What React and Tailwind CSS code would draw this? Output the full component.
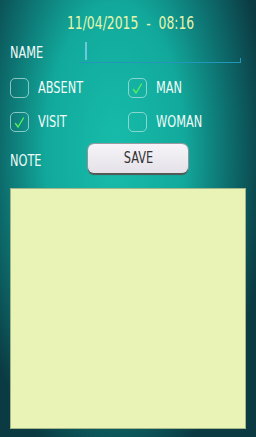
import React from "react";

const font = { fontFamily: '"DejaVu Sans Condensed", "Liberation Sans Narrow", "Liberation Sans", sans-serif' };

function Label({ children, className = "" }) {
  return (
    <span className={"block origin-left scale-x-[0.84] text-[15px] text-[#f2fbf8] leading-none whitespace-nowrap " + className}>
      {children}
    </span>
  );
}

function Box({ checked }) {
  return (
    <div className="w-[19px] h-[20px] shrink-0 rounded-[5px] border border-[#b9e6df]/70 flex items-center justify-center">
      {checked && (
        <svg width="13" height="13" viewBox="0 0 13 13">
          <path d="M2.5 7.5 L5 11 L10.5 2" fill="none" stroke="#55ee5e" strokeWidth="1.4" strokeLinecap="round" />
        </svg>
      )}
    </div>
  );
}

function Check({ label, checked }) {
  return (
    <div className="flex items-center gap-[9px] w-[119px]">
      <Box checked={checked} />
      <div className="flex"><Label>{label}</Label></div>
    </div>
  );
}

export default function App() {
  return (
    <div
      className="w-[256px] h-[437px] overflow-hidden bg-[radial-gradient(ellipse_60%_75%_at_45%_35%,#17bcab_0%,#12a99c_45%,#0d6c6c_75%,#0b3a42_100%)] flex flex-col px-[10px]"
      style={font}
    >
      <div className="pt-[15px] h-[42px] flex justify-center pl-[6px]">
        <span className="block scale-x-[0.81] text-[17px] leading-none text-[#e7f5ad] whitespace-nowrap">
          11/04/2015&nbsp;&nbsp;-&nbsp;&nbsp;08:16
        </span>
      </div>
      <div className="flex items-stretch h-[21px]">
        <div className="w-[70px] flex items-center pt-[2px]"><Label>NAME</Label></div>
        <div className="flex-1 border-b-[1.5px] border-[#2496bb] mr-[5px] relative">
          <div className="absolute left-[5px] top-0 h-[18px] w-[1.5px] bg-[#6cc8dc]"></div>
          <div className="absolute right-0 bottom-0 h-[4px] w-[1.5px] bg-[#2496bb]"></div>
        </div>
      </div>
      <div className="flex mt-[15px]">
        <Check label="ABSENT" />
        <Check label="MAN" checked />
      </div>
      <div className="flex mt-[14px]">
        <Check label="VISIT" checked />
        <Check label="WOMAN" />
      </div>
      <div className="flex items-center mt-[12px] h-[29px]">
        <div className="w-[78px] flex pt-[5px]"><Label>NOTE</Label></div>
        <button className="w-[100px] h-[29px] rounded-[6px] bg-[linear-gradient(#f6f4f8,#e4e2e8)] shadow-[0_2px_1px_#555,0_0_0_1px_#9a9aa0] flex items-center justify-center pb-[1px]" style={font}>
          <span className="block scale-x-[0.84] text-[15px] text-[#333] leading-none">SAVE</span>
        </button>
      </div>
      <div className="mt-[15px] h-[241px] bg-[#e9f3b6] border border-[#3a5a40]/40"></div>
    </div>
  );
}
